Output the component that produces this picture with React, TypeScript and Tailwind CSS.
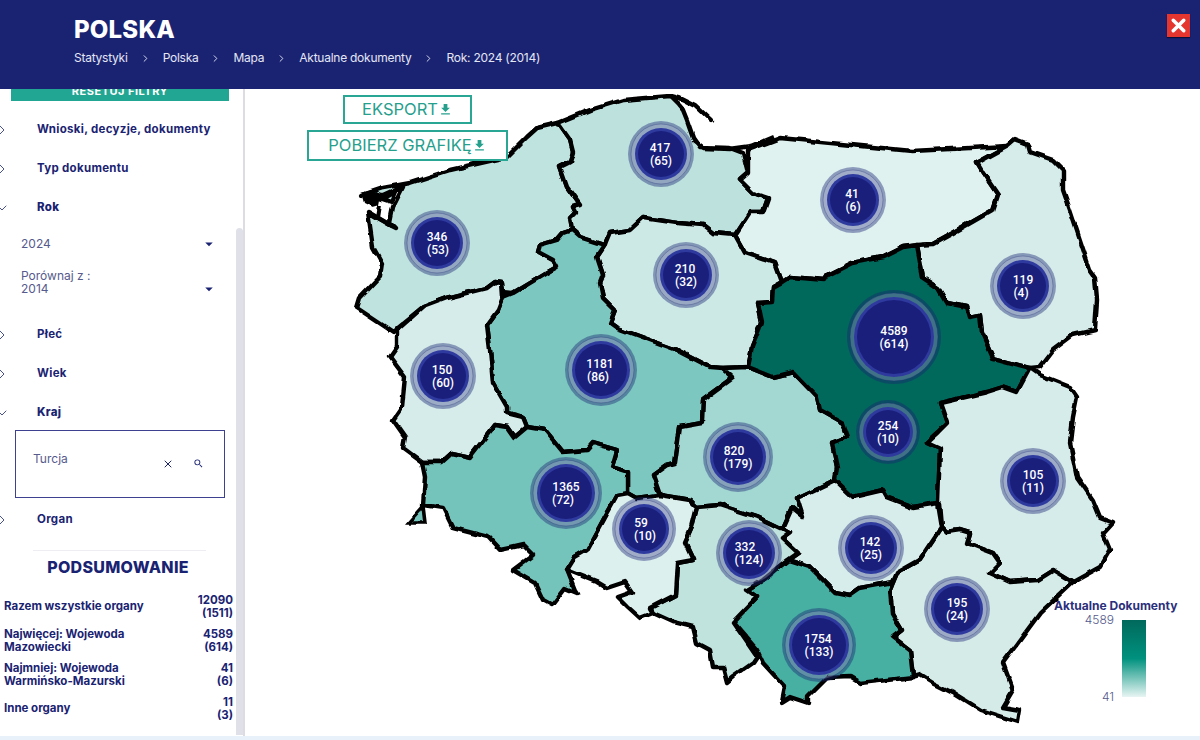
import { ChevronDown, ChevronRight, X } from "lucide-react";
import { MdArrowDropDown, MdFileDownload, MdSearch } from "react-icons/md";

const regions = [
  { fill: "#bfe3df", points: "362,195 383,188 410,183 450,170 507,157 527,137 537,128 558,123 570,140 573,152 570,162 560,167 567,187 580,205 572,207 575,213 570,218 572,230 563,233 557,240 540,245 538,252 553,260 557,267 548,272 513,293 503,292 502,283 495,282 487,288 447,298 423,307 397,328 393,332 357,308 360,298 380,277 382,263 373,247 368,212 380,219 392,226 396,228 390,222 393,207 403,187 383,196" },
  { fill: "#bde2de", points: "558,123 590,110 623,100 670,96 678,104 683,110 687,120 693,137 700,147 730,148 743,153 748,173 740,180 753,193 768,198 763,212 750,212 735,235 713,233 703,225 677,223 643,218 630,230 610,233 605,245 580,237 572,230 570,218 575,213 572,207 580,205 567,187 560,167 570,162 573,152 570,140" },
  { fill: "#dff2f0", points: "748,150 780,138 912,151 1008,146 977,163 983,173 998,195 993,210 953,233 933,244 903,247 883,257 852,263 828,275 825,280 790,277 782,282 775,263 745,253 735,235 750,212 763,212 768,198 753,193 740,180 748,173" },
  { fill: "#d5ecea", points: "1008,146 1015,140 1028,145 1030,152 1053,160 1063,170 1063,190 1070,210 1090,270 1095,277 1097,300 1095,330 1073,335 1053,350 1040,367 1030,368 993,358 982,333 980,315 970,317 967,307 947,303 938,288 923,278 917,245 933,244 953,233 993,210 998,195 983,173 977,163" },
  { fill: "#cde9e6", points: "605,245 610,233 630,230 643,218 677,223 703,225 713,233 735,235 745,253 775,263 782,282 773,287 772,302 758,303 762,322 752,347 748,367 722,368 710,367 677,350 617,328 610,323 615,310 603,298 600,283 603,275 597,257" },
  { fill: "#7cc8c0", points: "572,230 580,237 605,245 597,257 603,275 600,283 603,298 615,310 610,323 617,328 677,350 710,367 722,368 733,378 703,400 702,423 680,427 675,463 667,465 653,475 660,495 637,498 628,493 628,472 612,467 617,450 593,443 587,450 563,452 545,430 527,427 523,417 507,413 507,407 493,383 490,350 487,325 498,310 503,297 513,293 548,272 557,267 553,260 538,252 540,245 557,240 563,233" },
  { fill: "#d5ecea", points: "397,330 423,307 447,298 487,288 495,282 502,283 503,297 498,310 487,325 490,350 493,383 507,407 507,413 523,417 527,427 515,437 508,427 495,425 470,457 452,453 442,462 422,462 403,448 405,437 393,420 402,407 405,377 390,357 397,347" },
  { fill: "#74c4bb", points: "422,462 442,462 452,453 470,457 495,425 508,427 515,437 527,427 545,430 563,452 587,450 593,443 617,450 612,467 628,472 628,493 617,495 607,513 587,550 575,557 567,570 575,590 577,593 565,588 552,605 543,600 535,583 513,570 533,555 523,545 500,550 488,537 453,528 443,508 423,505 425,477" },
  { fill: "#a3d8d2", points: "722,368 748,367 773,377 793,372 817,397 820,410 843,423 848,437 832,443 837,467 835,480 797,498 803,517 792,508 783,528 780,528 757,517 720,505 697,507 690,500 660,495 653,475 667,465 675,463 680,427 702,423 703,400 733,378" },
  { fill: "#00695c", points: "782,282 790,277 825,280 828,275 852,263 883,257 903,247 917,245 923,278 938,288 947,303 967,307 970,317 980,315 982,333 993,358 1030,368 1017,392 1003,387 987,392 940,403 947,423 938,432 927,442 940,448 938,503 913,507 887,497 883,490 853,497 835,480 837,467 832,443 848,437 843,423 820,410 817,397 793,372 773,377 748,367 752,347 762,322 758,303 772,302 773,287" },
  { fill: "#d6ecea", points: "1030,368 1040,375 1070,387 1077,397 1073,417 1070,443 1077,477 1093,500 1100,517 1113,522 1103,533 1110,550 1100,567 1073,582 1053,570 1037,580 1010,582 990,573 1000,563 993,553 967,543 970,533 960,530 947,532 942,527 940,503 938,503 940,448 927,442 938,432 947,423 940,403 987,392 1003,387 1017,392" },
  { fill: "#d4ebe8", points: "942,527 947,532 960,530 970,533 967,543 993,553 1000,563 990,573 1010,582 1037,580 1053,570 1073,582 1040,613 1003,663 1013,690 1003,707 1020,710 1018,722 980,710 953,693 933,683 920,675 913,677 910,650 893,637 902,630 892,613 890,590 897,573 920,560" },
  { fill: "#d7edeb", points: "835,480 853,497 883,490 887,497 913,507 938,503 942,527 920,560 897,573 893,582 860,588 850,595 835,592 823,580 810,567 788,560 798,553 782,538 790,532 783,528 792,508 803,517 797,498" },
  { fill: "#47b0a3", points: "788,560 810,567 823,580 835,592 850,595 860,588 893,582 890,590 892,613 902,630 893,637 910,650 913,677 887,680 860,683 850,677 827,678 808,697 808,703 790,697 782,702 785,687 763,663 757,650 733,622 757,597 747,590 763,580" },
  { fill: "#c1e3de", points: "697,507 720,505 757,517 780,528 783,528 790,532 782,538 798,553 788,560 763,580 747,590 757,597 733,622 757,657 753,663 733,677 727,682 723,667 713,667 710,650 697,643 693,627 673,622 653,613 650,608 675,595 677,563 693,560 685,543 692,527" },
  { fill: "#dcf0ee", points: "617,495 628,493 637,498 660,495 690,500 697,507 692,527 685,543 693,560 677,563 675,595 650,608 653,613 640,618 628,607 618,597 632,592 625,582 607,588 597,582 567,570 575,557 587,550 607,513" },
];

const bubbles = [
  { x: 661, y: 154, r: 33, a: "417", b: "(65)", ax: 660, bx: 661 },
  { x: 437, y: 243, r: 33, a: "346", b: "(53)", ax: 437, bx: 438 },
  { x: 686, y: 275, r: 33, a: "210", b: "(32)", ax: 685, bx: 686 },
  { x: 443, y: 376, r: 33, a: "150", b: "(60)", ax: 442, bx: 443 },
  { x: 601, y: 370, r: 36, a: "1181", b: "(86)", ax: 600, bx: 598 },
  { x: 853, y: 200, r: 33, a: "41", b: "(6)", ax: 852, bx: 853 },
  { x: 1023, y: 286, r: 33, a: "119", b: "(4)", ax: 1023, bx: 1021 },
  { x: 894, y: 337, r: 47, a: "4589", b: "(614)", ax: 894, bx: 894 },
  { x: 888, y: 432, r: 32, a: "254", b: "(10)", ax: 888, bx: 888 },
  { x: 738, y: 457, r: 35, a: "820", b: "(179)", ax: 734, bx: 738 },
  { x: 566, y: 493, r: 36, a: "1365", b: "(72)", ax: 566, bx: 563 },
  { x: 644, y: 529, r: 32, a: "59", b: "(10)", ax: 641, bx: 645 },
  { x: 749, y: 553, r: 33, a: "332", b: "(124)", ax: 745, bx: 749 },
  { x: 871, y: 548, r: 33, a: "142", b: "(25)", ax: 870, bx: 871 },
  { x: 1033, y: 481, r: 33, a: "105", b: "(11)", ax: 1033, bx: 1033 },
  { x: 957, y: 609, r: 33, a: "195", b: "(24)", ax: 957, bx: 957 },
  { x: 819, y: 645, r: 37, a: "1754", b: "(133)", ax: 818, bx: 819 },
];

const crumbs = ["Statystyki", "Polska", "Mapa", "Aktualne dokumenty", "Rok: 2024 (2014)"];

function FilterRow({ label, open, heavy }: { label: string; open?: boolean; heavy?: boolean }) {
  return (
    <div className="flex h-[39px] items-center">
      {open ? (
        <ChevronDown className="-ml-[6px] h-4 w-4 shrink-0 text-[#1a2372]" strokeWidth={1.2} />
      ) : (
        <ChevronRight className="-ml-[6px] h-4 w-4 shrink-0 text-[#1a2372]" strokeWidth={1.2} />
      )}
      <span className={`ml-[27px] text-[11.5px] tracking-[0.3px] text-[#1a2372] ${heavy ? "font-extrabold" : "font-bold"}`}>
        {label}
      </span>
    </div>
  );
}

function SummaryRow({ lines, total, sub }: { lines: string[]; total: string; sub: string }) {
  return (
    <div className="flex h-[28px] items-center justify-between pl-1 pr-[3px] text-[11.5px] leading-[13.5px] font-bold text-[#1a2372]">
      <div>
        {lines.map((line) => (
          <div key={line}>{line}</div>
        ))}
      </div>
      <div className="text-right">
        <div>{total}</div>
        <div>{sub}</div>
      </div>
    </div>
  );
}

export default function App() {
  return (
    <div className="flex h-[740px] w-[1200px] flex-col overflow-hidden bg-white font-['Inter',sans-serif]">
      <header className="relative z-10 h-[89px] shrink-0 bg-[#1a2372] pl-[74px] pt-[15px] text-white">
        <h1 className="text-[24px] leading-[30px] font-extrabold tracking-[0.2px]">POLSKA</h1>
        <div className="mt-[5px] flex items-center text-[12px] leading-[16px] tracking-[-0.25px] text-[#e4e6f4]">
          {crumbs.map((crumb, i) => (
            <div key={crumb} className="flex items-center">
              {i > 0 && <ChevronRight className="mx-[12px] h-[11px] w-[11px]" strokeWidth={2} />}
              <span>{crumb}</span>
            </div>
          ))}
        </div>
        <button className="absolute left-[1167px] top-[14px] flex h-[23px] w-[23px] items-center justify-center bg-[#e5352f] shadow-[0_1px_1px_#0b0f3a]">
          <X className="h-[21px] w-[21px] text-white" strokeWidth={4} />
        </button>
      </header>

      <div className="flex h-[647px] shrink-0">
        <aside className="relative w-[245px] shrink-0 overflow-hidden border-r-2 border-[#dcdce2]">
          <div className="-mt-[18px] ml-[11px] flex h-[30px] w-[218px] items-center justify-center bg-[#20a692] pt-[10px] text-[11px] font-bold tracking-[0.5px] text-white">
            RESETUJ FILTRY
          </div>
          <div className="mt-[9px]">
            <FilterRow label="Wnioski, decyzje, dokumenty" />
            <FilterRow label="Typ dokumentu" />
            <FilterRow label="Rok" open heavy />
          </div>
          <div className="mt-[7px] flex h-[20px] w-[216px] items-center justify-between pl-[21px] text-[12px] text-[#565a8c]">
            <span>2024</span>
            <MdArrowDropDown className="-mr-[2px] h-[18px] w-[18px] text-[#1a2372]" />
          </div>
          <div className="mt-[15px] flex w-[216px] items-end justify-between pl-[21px] text-[12px] leading-[13px] text-[#565a8c]">
            <span>
              Porównaj z :
              <br />
              2014
            </span>
            <MdArrowDropDown className="-mr-[2px] -mb-[3px] h-[18px] w-[18px] text-[#1a2372]" />
          </div>
          <div className="mt-[20px]">
            <FilterRow label="Płeć" />
            <FilterRow label="Wiek" />
            <FilterRow label="Kraj" open heavy />
          </div>
          <div className="-mt-[2px] ml-[15px] flex h-[68px] w-[210px] items-start border border-[#3d4190] pl-[17px] pt-[20px] text-[12px] text-[#565a8c]">
            <span className="leading-[16px]">Turcja</span>
            <X className="ml-[94px] mt-[7px] h-[12px] w-[12px] text-[#1a2372]" strokeWidth={2} />
            <MdSearch className="ml-[19px] mt-[7px] h-[11px] w-[11px] text-[#1a2372]" />
          </div>
          <div className="mt-[2px]">
            <FilterRow label="Organ" />
          </div>
          <div className="ml-[33px] mt-[11px] w-[173px] border-t border-[#eeeef2]" />
          <h2 className="mt-[4px] w-[236px] text-center text-[16px] leading-[24px] font-extrabold tracking-[0.3px] text-[#1a2372]">
            PODSUMOWANIE
          </h2>
          <div className="mt-[14px] flex w-[236px] flex-col gap-[6px]">
            <SummaryRow lines={["Razem wszystkie organy"]} total="12090" sub="(1511)" />
            <SummaryRow lines={["Najwięcej: Wojewoda", "Mazowiecki"]} total="4589" sub="(614)" />
            <SummaryRow lines={["Najmniej: Wojewoda", "Warmińsko-Mazurski"]} total="41" sub="(6)" />
            <SummaryRow lines={["Inne organy"]} total="11" sub="(3)" />
          </div>
          <div className="absolute left-[236px] top-[139px] h-[507px] w-[7px] rounded-t-sm bg-[#e0e0e9]" />
        </aside>

        <main className="relative flex-1 overflow-hidden">
          <svg viewBox="245 89 955 647" className="absolute inset-0 h-full w-full">
            <defs>
              <filter id="rough" x="-5%" y="-5%" width="110%" height="110%">
                <feTurbulence type="fractalNoise" baseFrequency="0.06" numOctaves={2} seed={4} />
                <feDisplacementMap in="SourceGraphic" scale={5} xChannelSelector="R" yChannelSelector="G" />
              </filter>
            </defs>
            <g filter="url(#rough)">
              {regions.map((region) => (
                <polygon key={region.points} points={region.points} fill={region.fill} stroke="#000" strokeWidth={4.4} strokeLinejoin="round" />
              ))}
              <polyline points="670,96 682,99 696,106 712,121" fill="none" stroke="#000" strokeWidth={4.4} strokeLinecap="round" />
              <polyline points="693,140 704,148 730,149 752,146 773,137" fill="none" stroke="#000" strokeWidth={4.4} />
              <polygon points="361,193 372,190 381,194 379,205 372,207 364,203" fill="#000" />
              <polygon points="382,199 395,192 391,202" fill="#bfe3df" stroke="#000" strokeWidth={4} />
              <polyline points="380,205 378,218 392,226" fill="none" stroke="#000" strokeWidth={4} />
              <polygon points="408,523 425,523 423,506" fill="#74c4bb" stroke="#000" strokeWidth={3.6} />
            </g>
            {bubbles.map((b) => (
              <g key={b.a}>
                <circle cx={b.x} cy={b.y} r={b.r} fill="#1a2372" fillOpacity={0.42} />
                <circle cx={b.x} cy={b.y} r={b.r - 3} fill="#dfe4f0" fillOpacity={0.25} stroke="#1a2372" strokeOpacity={0.3} strokeWidth={1} />
                <circle cx={b.x} cy={b.y} r={b.r - 7} fill="#2f3a9f" />
                <circle cx={b.x} cy={b.y} r={b.r - 10} fill="#1a1f7c" />
                <text x={b.ax} y={b.y - 2} textAnchor="middle" fill="#fff" className="font-['Roboto',sans-serif] text-[12px] font-medium">
                  {b.a}
                </text>
                <text x={b.bx} y={b.y + 10.5} textAnchor="middle" fill="#fff" className="font-['Roboto',sans-serif] text-[12px] font-medium">
                  {b.b}
                </text>
              </g>
            ))}
          </svg>

          <button className="absolute left-[98px] top-[6px] flex h-[29px] w-[129px] items-center justify-center border-2 border-[#2aa694] bg-white text-[16.5px] text-[#26a08d]">
            EKSPORT
            <MdFileDownload className="h-[15px] w-[15px]" />
          </button>
          <button className="absolute left-[62px] top-[41px] flex h-[31px] w-[201px] items-center justify-center border-2 border-[#2aa694] bg-white text-[16.5px] text-[#26a08d]">
            POBIERZ GRAFIKĘ
            <MdFileDownload className="h-[15px] w-[15px]" />
          </button>

          <div className="absolute left-[809px] top-[510px] w-[130px] text-[#2b2f7c]">
            <div className="text-[12px] leading-[14px] font-bold whitespace-nowrap">Aktualne Dokumenty</div>
            <div className="mt-[7px] flex h-[77px]">
              <div className="flex w-[60px] flex-col items-end justify-between text-[12px] leading-[12px] font-light text-[#565a8c]">
                <span className="-mt-[6px]">4589</span>
                <span className="-mb-[6px]">41</span>
              </div>
              <div className="ml-[8px] w-[24px] bg-[linear-gradient(to_bottom,#00695c,#00917e_50%,#e8f5f3)]" />
            </div>
          </div>
        </main>
      </div>

      <div className="h-[4px] shrink-0 bg-[#e8f1fa]" />
    </div>
  );
}
